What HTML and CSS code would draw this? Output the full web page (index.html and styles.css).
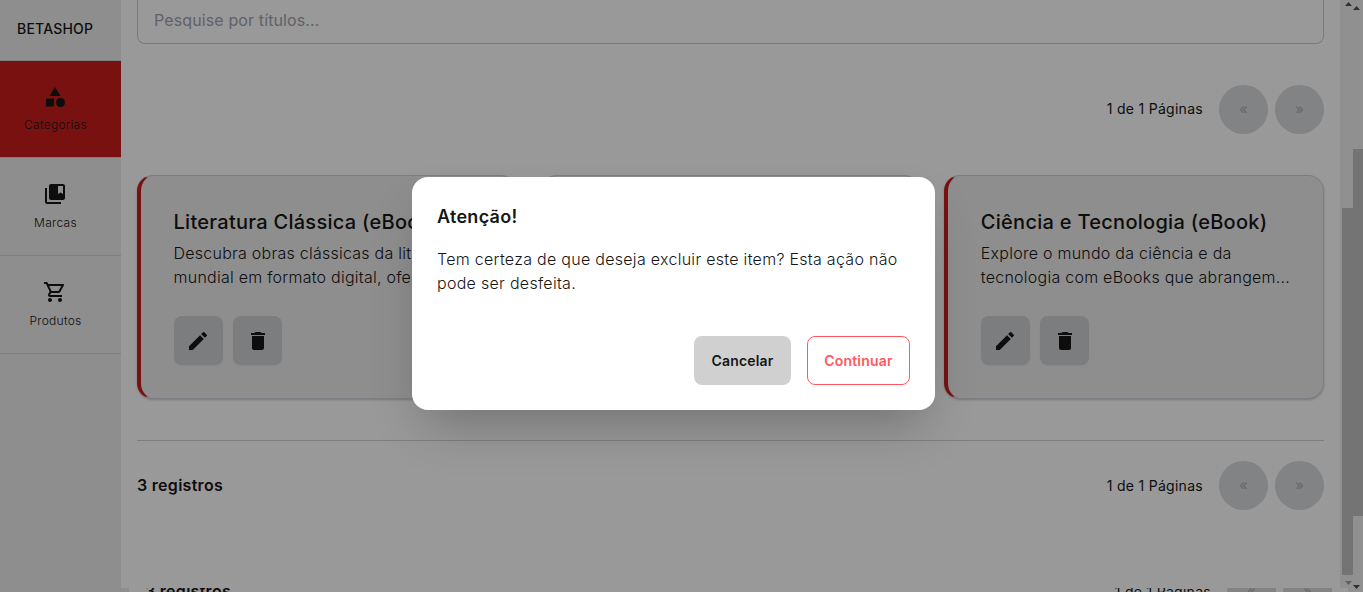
FILE: index.html
```
<!DOCTYPE html>
<html lang="pt-BR">
<head>
<meta charset="utf-8">
<title>BETASHOP</title>
<link rel="stylesheet" href="styles.css">
</head>
<body>
<svg class="defs" width="0" height="0">
  <symbol id="pencil" viewBox="0 0 24 24"><path d="M3 17.25V21h3.75L17.81 9.94l-3.75-3.75L3 17.25zM20.71 7.04a1 1 0 0 0 0-1.41l-2.34-2.34a1 1 0 0 0-1.41 0l-1.83 1.83 3.75 3.75 1.83-1.83z"/></symbol>
  <symbol id="trash" viewBox="0 0 24 24"><path d="M6 19c0 1.1.9 2 2 2h8c1.1 0 2-.9 2-2V7H6v12zM19 4h-3.5l-1-1h-5l-1 1H5v2h14V4z"/></symbol>
</svg>
<div class="app">
  <aside class="sidebar">
    <div class="brand">BETASHOP</div>
    <a class="nav active"><svg viewBox="0 0 24 24"><path d="M12 2l-5.5 9h11z"/><circle cx="17.5" cy="17.5" r="4.5"/><path d="M3 13.5h8v8H3z"/></svg><span>Categorias</span></a>
    <a class="nav"><svg viewBox="0 0 24 24"><path d="M4 6H2v14c0 1.1.9 2 2 2h14v-2H4V6z"/><path d="M20 2H8c-1.1 0-2 .9-2 2v12c0 1.1.9 2 2 2h12c1.1 0 2-.9 2-2V4c0-1.1-.9-2-2-2zm0 10l-2.5-1.5L15 12V4h5v8z"/></svg><span>Marcas</span></a>
    <a class="nav"><svg viewBox="0 0 24 24"><path d="M15.55 13c.75 0 1.41-.41 1.75-1.03l3.58-6.49A.996.996 0 0 0 20.01 4H5.21l-.94-2H1v2h2l3.6 7.59-1.35 2.44C4.52 15.37 5.48 17 7 17h12v-2H7l1.1-2h7.45zM6.16 6h12.15l-2.76 5H8.53L6.16 6zM7 18c-1.1 0-1.99.9-1.99 2S5.9 22 7 22s2-.9 2-2-.9-2-2-2zm10 0c-1.1 0-1.99.9-1.99 2s.89 2 1.99 2 2-.9 2-2-.9-2-2-2z"/></svg><span>Produtos</span></a>
  </aside>
  <main class="main">
    <div class="search">Pesquise por títulos...</div>
    <div class="pager top"><span>1 de 1 Páginas</span><button>«</button><button>»</button></div>
    <section class="cards">
      <article class="card">
        <h2>Literatura Clássica (eBook)</h2>
        <p>Descubra obras clássicas da lit<br>mundial em formato digital, ofe</p>
        <div class="actions"><button><svg><use href="#pencil"/></svg></button><button><svg><use href="#trash"/></svg></button></div>
      </article>
      <article class="card"></article>
      <article class="card">
        <h2>Ciência e Tecnologia (eBook)</h2>
        <p>Explore o mundo da ciência e da<br>tecnologia com eBooks que abrangem...</p>
        <div class="actions"><button><svg><use href="#pencil"/></svg></button><button><svg><use href="#trash"/></svg></button></div>
      </article>
    </section>
    <footer class="footer"><strong>3 registros</strong><div class="pager"><span>1 de 1 Páginas</span><button>«</button><button>»</button></div></footer>
  </main>
  <div class="scroll">
    <svg viewBox="0 0 23 592">
      <path fill="#c1c1c1" d="M2 208h11v367H2zM13 149h10v367H13z"/>
      <path fill="#505050" d="M5 6l3.5-4L12 6zM13 10l3.5-4L20 10zM13 585h7l-3.5 4z"/>
      <path fill="#a0a0a0" d="M5 581h7l-3.5 4z"/>
    </svg>
  </div>
</div>
<div class="peek"><div class="peek-side"></div><div class="footer peek-row"><strong>3 registros</strong><div class="pager"><span>1 de 1 Páginas</span><button>«</button><button>»</button></div></div></div>
<div class="overlay">
  <div class="modal">
    <h3>Atenção!</h3>
    <p>Tem certeza de que deseja excluir este item? Esta ação não pode ser desfeita.</p>
    <div class="modal-actions"><button class="cancel">Cancelar</button><button class="confirm">Continuar</button></div>
  </div>
</div>
</body>
</html>
```
FILE: styles.css
```
* { box-sizing: border-box; }
body { margin: 0; height: 592px; overflow: hidden; position: relative; background: #fff; color: #161616; font: 300 16px/24px Inter, sans-serif; letter-spacing: .29px; }
h2, h3, p { margin: 0; }
button { font: inherit; letter-spacing: inherit; color: inherit; border: 0; padding: 0; display: flex; align-items: center; justify-content: center; }
svg { fill: #161616; }
.defs { position: absolute; }
.app { display: flex; height: 592px; }
.sidebar { width: 121px; background: #ededed; flex: none; }
.brand { height: 61px; padding: 17px 0 0 17px; font-size: 14px; font-weight: 500; letter-spacing: .2px; border-bottom: 1px solid #d1d5db; }
.nav { height: 98px; padding: 24px 11px 0 0; display: flex; flex-direction: column; align-items: center; gap: 8px; font-size: 12px; line-height: 18px; letter-spacing: .28px; border-bottom: 1px solid #d1d1db; }
.nav span { padding-left: 1px; }
.nav svg { width: 24px; height: 24px; }
.nav.active { height: 97px; gap: 7px; background: #cc1d1d; }
.main { flex: 1; padding: 0 16px; }
.search { height: 44px; padding: 8px 16px 0; border: 1px solid #cdcdd1; border-top: 0; border-radius: 0 0 8px 8px; color: #a0a3ad; font-size: 16px; font-weight: 400; letter-spacing: .12px; }
.pager { display: flex; align-items: center; gap: 7px; font-size: 14px; font-weight: 400; letter-spacing: .28px; }
.pager span { margin-right: 9px; }
.pager button { width: 49px; height: 49px; border-radius: 50%; background: #d9dadc; color: #b4b4b6; font-weight: 600; padding-bottom: 1px; }
.pager.top { margin-top: 41px; justify-content: flex-end; }
.pager.top span { margin-bottom: 1px; }
.cards { display: grid; grid-template-columns: repeat(3, minmax(0, 1fr)); gap: 24px; margin-top: 41px; }
.card { height: 224px; padding: 32px 32px 32px 32.5px; border: 1px solid #d1d1db; border-left: 4px solid #cc1d1d; border-radius: 16px; background: #ededed; box-shadow: 0 1px 3px rgba(0,0,0,.12), 0 1px 2px rgba(0,0,0,.1); white-space: nowrap; }
.card h2 { font-size: 20px; line-height: 28px; font-weight: 500; letter-spacing: .28px; margin-bottom: 5px; }
.card p { letter-spacing: .25px; }
.actions { display: flex; gap: 10.6px; margin-top: 27px; }
.actions button { width: 49px; height: 49px; border-radius: 8px; background: #cfd0d2; box-shadow: 0 1px 2px rgba(0,0,0,.05); }
.actions svg { width: 24px; height: 24px; }
.footer { display: flex; align-items: center; justify-content: space-between; border-top: 1px solid #d1d1db; margin-top: 41px; padding-top: 20px; }
.footer strong { font-weight: 600; margin-bottom: 1px; }
.scroll { width: 23px; background: #f1f1f1; flex: none; }
.scroll svg { display: block; width: 23px; height: 592px; }
.peek { position: absolute; left: 0; right: 15px; bottom: 0; height: 4px; overflow: hidden; display: flex; background: #fff; }
.peek-side { width: 129px; background: #ededed; flex: none; }
.peek-row { flex: 1; height: 49px; margin: -21px 16px 0; padding: 0; border: 0; }
.overlay { position: absolute; inset: 0; background: rgba(0,0,0,.4); display: flex; align-items: flex-start; justify-content: flex-start; padding: 177px 0 0 412px; }
.modal { width: 523px; height: 233px; padding: 26px 25px 25px; border-radius: 16px; background: #fff; box-shadow: 0 25px 50px -12px rgba(0,0,0,.25); }
.modal h3 { font-size: 18px; line-height: 28px; font-weight: 600; margin-bottom: 16px; }
.modal-actions { display: flex; justify-content: flex-end; gap: 16px; margin-top: 41px; }
.modal button { height: 49px; border-radius: 8px; font-size: 14px; font-weight: 600; letter-spacing: .2px; }
.cancel { width: 97px; background: #d0d0d0; }
.confirm { width: 103px; background: #fff; border: 1px solid #ff5861; color: #ff5861; }
```
